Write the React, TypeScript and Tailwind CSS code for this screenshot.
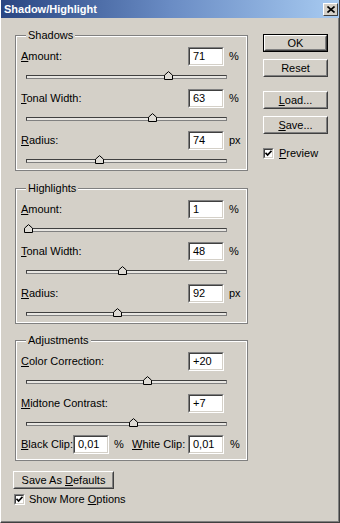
import React from "react";

// Classic 3D bevels
const Sunken = ({ w, children }: { w: string; children?: React.ReactNode }) => (
  <div className={`h-[19px] ${w} border border-t-[#808080] border-l-[#808080] border-b-white border-r-white`}>
    <div className="h-full border border-t-[#404040] border-l-[#404040] border-b-[#d4d0c8] border-r-[#d4d0c8] bg-white pl-[3px] text-[11px] leading-[15px]">
      {children}
    </div>
  </div>
);

const Btn = ({ children, def, w }: { children: React.ReactNode; def?: boolean; w: string }) => (
  <div className={`h-[18px] ${w} ${def ? "border border-black" : ""}`}>
    <div className="h-full border border-t-white border-l-white border-b-[#404040] border-r-[#404040]">
      <div className="h-full flex items-center justify-center border border-t-[#d4d0c8] border-l-[#d4d0c8] border-b-[#808080] border-r-[#808080] text-[11px] leading-none">
        <span>{children}</span>
      </div>
    </div>
  </div>
);

const Check = () => (
  <div className="w-[11px] h-[11px] shrink-0 border border-t-[#808080] border-l-[#808080] border-b-white border-r-white">
    <div className="w-full h-full border border-t-[#404040] border-l-[#404040] border-b-[#d4d0c8] border-r-[#d4d0c8] bg-white flex items-center justify-center">
      <svg width="7" height="7" viewBox="0 0 7 7">
        <polyline points="0.5,2.8 2.6,5 6.5,0.8" fill="none" stroke="#000" strokeWidth="1.7" />
      </svg>
    </div>
  </div>
);

const Slider = ({ pos, last }: { pos: number; last?: boolean }) => (
  <div className={`pt-[9px] pl-[5px] ${last ? "pb-0" : "pb-[10px]"}`}>
    <div className="relative w-[201px] h-[4px] border border-t-[#404040] border-l-[#404040] border-b-[#808080] border-r-[#808080] bg-[#e8e6e2]">
      <svg
        className="absolute bottom-[-2px]"
        style={{ left: pos - 5 }}
        width="9"
        height="9"
        viewBox="0 0 9 9"
      >
        <path d="M0.5 8.5 V4.2 L4.5 0.6 L8.5 4.2 V8.5 Z" fill="#dedbd5" stroke="#000" strokeWidth="1" />
      </svg>
    </div>
  </div>
);

const Field = ({
  label,
  k,
  value,
  unit,
  pos,
  last,
}: {
  label: string;
  k: number;
  value: string;
  unit?: string;
  pos: number;
  last?: boolean;
}) => (
  <div>
    <div className="flex items-center h-[19px]">
      <span className="flex-1 text-[11px]">
        {label.slice(0, k)}
        <u>{label[k]}</u>
        {label.slice(k + 1)}
      </span>
      <Sunken w="w-[36px]">{value}</Sunken>
      <span className="w-[22px] pl-[5px] text-[11px]">{unit}</span>
    </div>
    <Slider pos={pos} last={last} />
  </div>
);

const Group = ({ title, className, children }: { title: string; className: string; children: React.ReactNode }) => (
  <div className={`relative ml-[2px] w-[233px] border border-[#808080] ${className}`}>
    <div className="border border-white pl-[4px] pr-0">
      {children}
    </div>
    <span className="absolute top-[-8px] left-[10px] bg-[#d4d0c8] px-[2px] text-[11px] leading-[14px]">{title}</span>
  </div>
);

export default function App() {
  return (
    <div className="w-[340px] h-[523px] bg-[#d4d0c8] text-black font-['Liberation_Sans',Arial,sans-serif] border-l border-l-white border-r border-r-[#404040] border-b border-b-[#404040] flex flex-col">
      <div className="h-[18px] flex items-center justify-between bg-linear-to-r from-[#2a4682] via-[#6a8cc4] to-[#a8cbf1] pl-[3px] pr-[1px]">
        <span className="text-white font-bold text-[11px] leading-none">Shadow/Highlight</span>
        <div className="w-[15px] h-[13px] border border-t-white border-l-white border-b-[#404040] border-r-[#404040] bg-[#d4d0c8] flex items-center justify-center">
          <svg width="8" height="7" viewBox="0 0 8 7">
            <path d="M0.5 0.5 L7.5 6.5 M7.5 0.5 L0.5 6.5" stroke="#000" strokeWidth="1.6" />
          </svg>
        </div>
      </div>

      <div className="flex-1 flex border-b border-b-[#808080] border-r border-r-[#808080]">
        <div className="pl-[12px] pt-[17px] flex flex-col">
          <Group title="Shadows" className="">
            <div className="pt-[10px] pb-[6px]">
              <Field label="Amount:" k={0} value="71" unit="%" pos={142} />
              <Field label="Tonal Width:" k={0} value="63" unit="%" pos={126} />
              <Field label="Radius:" k={0} value="74" unit="px" pos={73} last />
            </div>
          </Group>

          <Group title="Highlights" className="mt-[17px]">
            <div className="pt-[10px] pb-[6px]">
              <Field label="Amount:" k={0} value="1" unit="%" pos={2} />
              <Field label="Tonal Width:" k={0} value="48" unit="%" pos={96} />
              <Field label="Radius:" k={0} value="92" unit="px" pos={91} last />
            </div>
          </Group>

          <Group title="Adjustments" className="mt-[16px]">
            <div className="pt-[10px] pb-[5px]">
              <Field label="Color Correction:" k={0} value="+20" pos={121} />
              <div className="mb-[-1px]">
                <Field label="Midtone Contrast:" k={0} value="+7" pos={107} />
              </div>
              <div className="flex items-center h-[19px] text-[11px]">
                <span className="w-[52px]">
                  <u>B</u>lack Clip:
                </span>
                <Sunken w="w-[36px]">0,01</Sunken>
                <span className="w-[23px] pl-[5px]">%</span>
                <span className="w-[56px]">
                  <u>W</u>hite Clip:
                </span>
                <Sunken w="w-[36px]">0,01</Sunken>
                <span className="pl-[6px]">%</span>
              </div>
            </div>
          </Group>

          <div className="mt-[10px]">
            <Btn w="w-[101px]">
              Save As <u>D</u>efaults
            </Btn>
          </div>
          <div className="mt-[5px] ml-[1px] flex items-center gap-[4px] text-[11px] leading-none">
            <Check />
            <span>
              Show More <u>O</u>ptions
            </span>
          </div>
        </div>

        <div className="pl-[15px] pt-[16px] flex flex-col">
          <Btn def w="w-[65px]">OK</Btn>
          <div className="mt-[7px]">
            <Btn w="w-[65px]">Reset</Btn>
          </div>
          <div className="mt-[14px]">
            <Btn w="w-[65px]">
              <u>L</u>oad...
            </Btn>
          </div>
          <div className="mt-[7px]">
            <Btn w="w-[65px]">
              <u>S</u>ave...
            </Btn>
          </div>
          <div className="mt-[14px] flex items-center gap-[5px] text-[11px] leading-none">
            <Check />
            <span>
              <u>P</u>review
            </span>
          </div>
        </div>
      </div>
    </div>
  );
}
